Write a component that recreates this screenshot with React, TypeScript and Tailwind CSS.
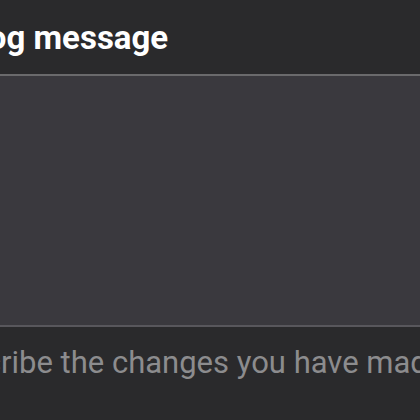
export default function App() {
  return (
    <div className="w-[420px] h-[420px] overflow-hidden bg-[#2a2a2c] flex flex-col" style={{ fontFamily: 'Roboto, "Liberation Sans", sans-serif' }}>
      <div className="h-[74px] flex items-center shrink-0">
        <div className="ml-[-30px] whitespace-nowrap text-[33px] font-bold text-white leading-none mt-[0px]">Log message</div>
      </div>
      <div className="h-[253px] shrink-0 bg-[#3a393e] border-t-2 border-t-[#6a6a6c] border-b-2 border-b-[#58575c]"></div>
      <div className="whitespace-nowrap ml-[-68px] mt-[20px] text-[31px] text-[#8c8c8e] leading-none">Describe the changes you have made</div>
    </div>
  );
}
